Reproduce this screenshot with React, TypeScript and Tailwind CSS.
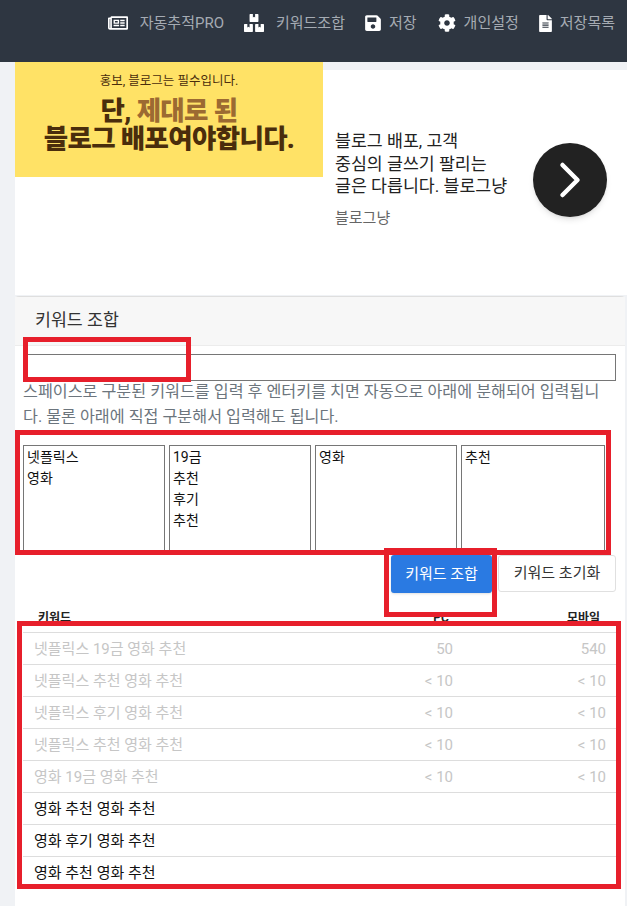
import { FaBoxes, FaCog, FaFileAlt, FaRegNewspaper, FaSave } from "react-icons/fa";
import { FiChevronRight } from "react-icons/fi";

const font = { fontFamily: '"Roboto", "Noto Sans CJK KR", sans-serif' };

const rows = [
  { name: "넷플릭스 19금 영화 추천", pc: "50", mobile: "540", done: true },
  { name: "넷플릭스 추천 영화 추천", pc: "< 10", mobile: "< 10", done: true },
  { name: "넷플릭스 후기 영화 추천", pc: "< 10", mobile: "< 10", done: true },
  { name: "넷플릭스 추천 영화 추천", pc: "< 10", mobile: "< 10", done: true },
  { name: "영화 19금 영화 추천", pc: "< 10", mobile: "< 10", done: true },
  { name: "영화 추천 영화 추천", pc: "", mobile: "", done: false },
  { name: "영화 후기 영화 추천", pc: "", mobile: "", done: false },
  { name: "영화 추천 영화 추천", pc: "", mobile: "", done: false },
];

const boxes = [
  ["넷플릭스", "영화"],
  ["19금", "추천", "후기", "추천"],
  ["영화"],
  ["추천"],
];

const nav = [
  { label: "자동추적PRO", icon: <FaRegNewspaper size={20} />, cls: "gap-3" },
  { label: "키워드조합", icon: <FaBoxes size={20} />, cls: "ml-5 gap-3" },
  { label: "저장", icon: <FaSave size={18} />, cls: "ml-[19px] gap-[7px]" },
  { label: "개인설정", icon: <FaCog size={18} />, cls: "ml-[21px] gap-2" },
  { label: "저장목록", icon: <FaFileAlt size={17} />, cls: "ml-[18px] gap-[6px]" },
];

export default function App() {
  return (
    <div className="relative h-[906px] w-[627px] overflow-hidden bg-[#f0f2f5]" style={font}>
      <nav className="flex h-[62px] items-start justify-end bg-[#2e3641] pr-3 pt-[13px]">
        {nav.map((item) => (
          <div key={item.label} className={`flex h-[20px] items-center text-[15px] text-[#a5abb3] ${item.cls}`}>
            <span className="text-white">{item.icon}</span>
            {item.label}
          </div>
        ))}
      </nav>

      <div className="pl-[15px]">
        <div className="mt-2 flex h-[225px] bg-white">
          <div className="-mt-2 flex h-[115px] w-[308px] shrink-0 flex-col items-center bg-[#ffe266] pt-[9px] text-[#4a2d0c]">
            <p className="text-[12.5px] leading-5">홍보, 블로그는 필수입니다.</p>
            <p className="mt-[6px] text-[26.5px] font-black leading-[28px] tracking-tight">
              단, <span className="text-[#9c6a32]">제대로 된</span>
            </p>
            <p className="text-[26.5px] font-black leading-[28px] tracking-tight">블로그 배포여야합니다.</p>
          </div>
          <div className="ml-3 mt-[60px] w-[198px] shrink-0">
            <p className="text-[17.3px] leading-[22.5px] text-[#222]">
              블로그 배포, 고객
              <br />
              중심의 글쓰기 팔리는
              <br />
              글은 다릅니다. 블로그냥
            </p>
            <p className="mt-[10px] text-[15px] leading-5 text-[#666]">블로그냥</p>
          </div>
          <div className="mt-[73px] flex h-[74px] w-[74px] shrink-0 items-center justify-center rounded-full bg-[#222] text-white shadow-md">
            <FiChevronRight size={60} strokeWidth={1.8} />
          </div>
        </div>

        <div className="mt-[1px] mr-[2px] h-[620px] rounded-t border-t border-[#dfdfdf] bg-white">
          <div className="flex h-[49px] items-center border-b border-[#ececec] bg-[#f7f7f7] pl-5 text-[17.3px] text-[#333]">
            키워드 조합
          </div>
          <div className="pl-2 pr-2">
            <input className="mt-2 block h-[27px] w-[593px] border border-[#767676] bg-white" />
            <p className="-mt-[2px] w-[585px] break-all text-[16.2px] leading-[25px] text-[#6c757d]">
              스페이스로 구분된 키워드를 입력 후 엔터키를 치면 자동으로 아래에 분해되어 입력됩니다. 물론 아래에 직접 구분해서 입력해도 됩니다.
            </p>
            <div className="mt-[16px] flex gap-1">
              {boxes.map((lines, i) => (
                <div
                  key={i}
                  className={`h-[110px] border border-[#767676] px-[3px] pt-[1px] text-[14px] leading-[21px] text-[#111] ${i === 3 ? "w-[144px]" : "w-[142px]"}`}
                >
                  {lines.map((line, j) => (
                    <div key={j}>{line}</div>
                  ))}
                </div>
              ))}
            </div>
            <div className="flex w-[593px] justify-end gap-[6px]">
              <button className="h-[38px] w-[101px] rounded-[3px] bg-[#2a7ae2] text-[15px] text-white shadow-sm">
                키워드 조합
              </button>
              <button className="h-[37px] w-[118px] rounded-[3px] border border-[#e0e0e0] bg-white text-[15px] text-[#333]">
                키워드 초기화
              </button>
            </div>
            <div className="mt-[15px] w-[593px]">
              <div className="flex h-[24px] items-start pt-[1px] text-[12px] font-bold text-[#222]">
                <span className="ml-[15px] flex-1">키워드</span>
                <span className="mr-[118px]">PC</span>
                <span className="mr-[16px]">모바일</span>
              </div>
              {rows.map((row, i) => (
                <div
                  key={i}
                  className={`flex h-[32px] items-center border-t border-[#dddddd] pt-[1px] text-[15px] ${row.done ? "text-[#c6c6c6]" : "text-[#111]"}`}
                >
                  <span className="ml-[11px] flex-1">{row.name}</span>
                  <span className="w-[60px] text-right">{row.pc}</span>
                  <span className="mr-[10px] w-[153px] text-right">{row.mobile}</span>
                </div>
              ))}
            </div>
          </div>
        </div>
      </div>

      {/* red markup drawn over the screenshot */}
      <div className="absolute left-[23px] top-[337px] h-[45px] w-[168px] border-[5px] border-[#e71f2b]" />
      <div className="absolute left-[15px] top-[430px] h-[125px] w-[596px] border-[5px] border-[#e71f2b]" />
      <div className="absolute left-[384px] top-[548px] h-[69px] w-[113px] border-[5px] border-[#e71f2b]" />
      <div className="absolute left-[17px] top-[621px] h-[268px] w-[604px] border-[5px] border-[#e71f2b]" />
    </div>
  );
}
